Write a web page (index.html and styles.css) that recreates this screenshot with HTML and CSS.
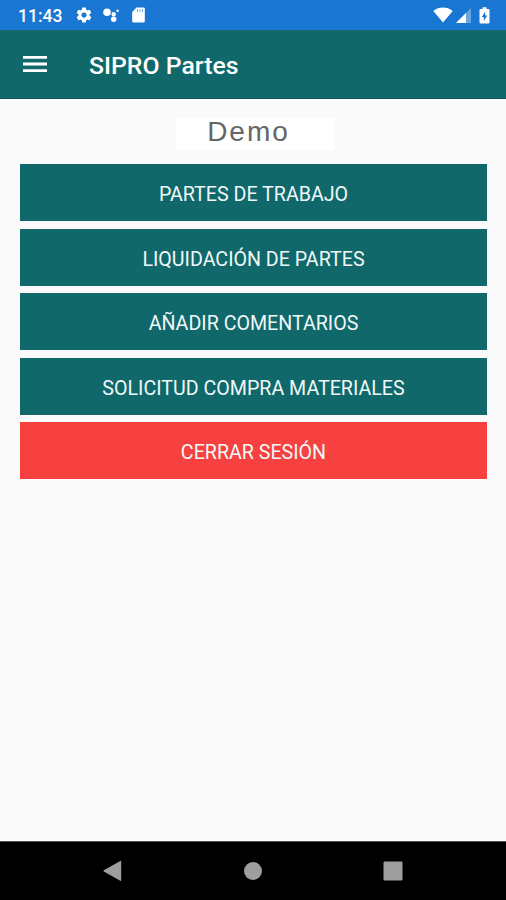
FILE: index.html
```html
<!DOCTYPE html>
<html lang="es">
<head>
<meta charset="utf-8">
<title>SIPRO Partes</title>
<link rel="stylesheet" href="styles.css">
</head>
<body>
<div class="status">
  <span class="time">11:43</span>
  <svg class="gear" width="18" height="18" viewBox="0 0 24 24" fill="#fff"><path d="M19.43 12.98c.04-.32.07-.64.07-.98s-.03-.66-.07-.98l2.11-1.65c.19-.15.24-.42.12-.64l-2-3.46c-.12-.22-.39-.3-.61-.22l-2.49 1c-.52-.4-1.08-.73-1.69-.98l-.38-2.65C14.46 2.18 14.25 2 14 2h-4c-.25 0-.46.18-.49.42l-.38 2.65c-.61.25-1.17.59-1.69.98l-2.49-1c-.23-.09-.49 0-.61.22l-2 3.460c-.13.22-.07.49.12.64l2.110 1.650c-.04.32-.07.65-.07.98s.03.66.07.98l-2.110 1.650c-.19.15-.24.42-.12.64l2 3.460c.12.22.39.3.61.22l2.490-1c.52.4 1.080.73 1.690.98l.38 2.650c.03.24.24.42.49.42h4c.25 0 .46-.18.49-.42l.38-2.650c.61-.25 1.170-.59 1.690-.98l2.490 1c.23.09.49 0 .61-.22l2-3.460c.12-.22.07-.49-.12-.64l-2.110-1.650zM12 15.500c-1.930 0-3.500-1.570-3.500-3.500s1.570-3.500 3.500-3.500 3.500 1.570 3.500 3.500-1.570 3.500-3.500 3.500z"/></svg>
  <svg class="dots" width="18" height="16" viewBox="0 0 18 16" fill="#fff"><circle cx="5" cy="5.3" r="3.8"/><circle cx="11.7" cy="7.2" r="2.2"/><circle cx="11.7" cy="12.2" r="2.7"/><circle cx="15.6" cy="3.8" r="1.2"/></svg>
  <svg class="card" width="13" height="16" viewBox="0 0 13 16"><path fill="#fff" d="M4.5.5h7a1.3 1.3 0 0 1 1.3 1.3v12.4a1.3 1.3 0 0 1-1.3 1.3h-10A1.3 1.3 0 0 1 .2 14.2V5z"/><path stroke="#1976d2" stroke-opacity=".75" stroke-width="1" d="M5.500 2.300v2.500M8 2.300v2.500M10.500 2.300v2.500"/></svg>
  <svg class="wifi" width="20" height="16" viewBox="0 0 20 16" fill="#fff"><path d="M10 15.500.3 3.900C3 1.600 6.400.5 10 .5s7 1.100 9.700 3.400z"/></svg>
  <svg class="signal" width="15" height="15" viewBox="0 0 15 15" fill="#fff"><path opacity=".35" d="M0 15 15 0v15z"/><path d="M0 15 10 5v10z"/></svg>
  <svg class="battery" width="11" height="17" viewBox="0 0 11 17"><path fill="#fff" d="M3.500.3h4v1.700h1.800A1.200 1.200 0 0 1 10.500 3.200v12a1.200 1.200 0 0 1-1.200 1.200H1.700A1.200 1.200 0 0 1 .5 15.200v-12A1.200 1.200 0 0 1 1.700 2h1.800z"/><path fill="#1976d2" d="M6.200 4.500 2.800 10h2v4l3.400-5.600h-2z"/></svg>
</div>
<header class="bar">
  <svg class="menu" width="24" height="18" viewBox="0 0 24 18" fill="#fff"><path d="M0 1h24v2.800H0zM0 7.600h24v2.800H0zM0 14.200h24V17H0z"/></svg>
  <h1>SIPRO Partes</h1>
</header>
<main>
  <div class="client">Demo</div>
  <nav class="actions">
    <button><span>PARTES DE TRABAJO</span></button>
    <button><span>LIQUIDACIÓN DE PARTES</span></button>
    <button><span>AÑADIR COMENTARIOS</span></button>
    <button><span>SOLICITUD COMPRA MATERIALES</span></button>
    <button class="logout"><span>CERRAR SESIÓN</span></button>
  </nav>
</main>
<footer class="navbar">
  <svg width="20" height="22" viewBox="0 0 20 22" fill="#9e9e9e"><path d="M.8 10.300 17.300.9q.9-.4.900.6v18.800q0 1-.9.500L.8 11.500q-.8-.6 0-1.200z"/></svg>
  <svg width="18" height="18" viewBox="0 0 18 18" fill="#9e9e9e"><circle cx="9" cy="9" r="9"/></svg>
  <svg width="20" height="20" viewBox="0 0 20 20" fill="#9e9e9e"><rect x=".5" y=".5" width="19" height="19" rx="1.200"/></svg>
</footer>
</body>
</html>
```
FILE: styles.css
```css
* { box-sizing: border-box; }
body {
  margin: 0;
  height: 900px;
  display: flex;
  flex-direction: column;
  background: #fafafa;
  font-family: Roboto, sans-serif;
}
svg { display: block; flex: none; }
.status {
  height: 30px;
  flex: none;
  display: flex;
  align-items: center;
  padding: 0 16px 0 18px;
  background: #1976d2;
  color: #fff;
}
.time { width: 57px; font-size: 17.5px; font-weight: 500; line-height: 30px; padding-top: 2px; }
.dots { margin-left: 9px; }
.card { margin-left: 12px; }
.wifi { margin-left: auto; }
.signal { margin-left: 3px; }
.battery { margin-left: 8px; }
.bar {
  height: 69px;
  flex: none;
  display: flex;
  align-items: center;
  padding-left: 23px;
  background: #10686b;
  border-bottom: 1px solid #0b5360;
  color: #fff;
}
.bar h1 { margin: 3px 0 0 42px; font-size: 24.8px; font-weight: 500; line-height: 30px; }
main { flex: 1; padding: 19px 19px 0 20px; }
.client {
  width: 159px;
  height: 32px;
  margin: 0 auto 14px 156px;
  padding-right: 14px;
  background: #fff;
  color: #666;
  font: 28px/28px "Liberation Sans", sans-serif;
  letter-spacing: 2px;
  text-align: center;
}
.actions { display: grid; gap: 7.5px; }
.actions button {
  height: 57px;
  padding: 5px 0 0;
  border: 0;
  background: #10686b;
  color: #f0f8f8;
  font: 19.65px/24px Roboto, sans-serif;
}
.actions .logout { background: #f74141; }
.navbar {
  height: 59px;
  flex: none;
  display: flex;
  justify-content: space-between;
  align-items: center;
  padding: 0 103px;
  background: #000;
  border-top: 1px solid #555;
}
```
